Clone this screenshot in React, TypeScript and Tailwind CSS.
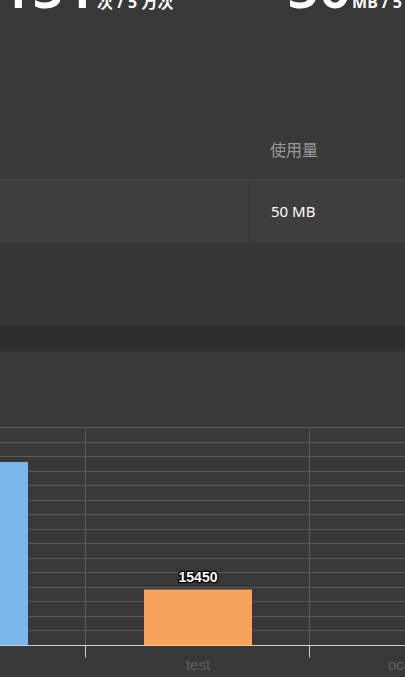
import React from "react";

const FONT = '"Noto Sans", "Noto Sans CJK SC", sans-serif';

function Chart() {
  const lines: number[] = [];
  for (let i = 0; i < 15; i++) lines.push(Math.round(i * 14.533) + 0.5);
  const base = 218.5;
  return (
    <svg width={405} height={250} className="block">
      {lines.map((y, i) => (
        <line key={i} x1={0} x2={405} y1={y} y2={y} stroke="#5a5a5a" strokeWidth={1.2} />
      ))}
      <line x1={85.5} x2={85.5} y1={0} y2={base} stroke="#5a5a5a" strokeWidth={1.2} />
      <line x1={309.5} x2={309.5} y1={0} y2={base} stroke="#5a5a5a" strokeWidth={1.2} />
      <rect x={0} y={35} width={28} height={183} fill="#7cb5ec" />
      <rect x={144} y={162.5} width={108} height={55.5} fill="#f7a35c" />
      <text
        x={198}
        y={155}
        textAnchor="middle"
        fontFamily='"Liberation Sans", Arial, sans-serif'
        fontWeight="bold"
        fontSize={14}
        fill="#ffffff"
        stroke="#000000"
        strokeWidth={2.5}
        strokeLinejoin="round"
        style={{ paintOrder: "stroke" }}
      >
        15450
      </text>
      <line x1={0} x2={405} y1={base} y2={base} stroke="#c0d0e0" strokeWidth={1} />
      <line x1={85.5} x2={85.5} y1={base} y2={base + 12} stroke="#c0d0e0" strokeWidth={1} />
      <line x1={309.5} x2={309.5} y1={base} y2={base + 12} stroke="#c0d0e0" strokeWidth={1} />
      <text x={198} y={243} textAnchor="middle" fontFamily='"Liberation Sans", Arial, sans-serif' fontSize={15} fill="#626262">
        test
      </text>
      <text x={388} y={243} fontFamily='"Liberation Sans", Arial, sans-serif' fontSize={15} fill="#626262">
        occupy
      </text>
    </svg>
  );
}

export default function App() {
  return (
    <div className="w-[405px] h-[677px] overflow-hidden bg-[#383838] flex flex-col" style={{ fontFamily: FONT }}>
      {/* stats */}
      <div className="h-[120px] shrink-0 flex">
        <div className="w-[287px] shrink-0 flex items-baseline pl-[0px] mt-[-42px] h-[56px]">
          <span className="text-[56px] leading-none text-white font-semibold">151</span>
          <span className="text-[16px] leading-none text-white font-bold ml-[1px]">次 / 5 万次</span>
        </div>
        <div className="flex items-baseline mt-[-42px] h-[56px] whitespace-nowrap">
          <span className="text-[56px] leading-none text-white font-semibold">50</span>
          <span className="text-[16px] leading-none text-white font-bold ml-[1px]">MB / 5 GB</span>
        </div>
      </div>
      {/* table header */}
      <div className="h-[60px] shrink-0 flex items-center border-b border-[#4a4a4a] bg-[#393939]">
        <div className="w-[249px] shrink-0" />
        <div className="pl-[21px] text-[16px] text-[#9a9a9a]">使用量</div>
      </div>
      {/* table row */}
      <div className="h-[62px] shrink-0 flex bg-[#3e3e3e]">
        <div className="w-[249px] shrink-0 border-r border-[#353535]" />
        <div className="pl-[22px] flex items-center text-[15px] text-white">50 MB</div>
      </div>
      <div className="h-[84px] shrink-0 bg-[#363636]" />
      <div className="h-[25px] shrink-0 bg-[#2e2e2e]" />
      {/* chart card */}
      <div className="flex-1 bg-[#383838] pt-[76px]">
        <Chart />
      </div>
    </div>
  );
}
